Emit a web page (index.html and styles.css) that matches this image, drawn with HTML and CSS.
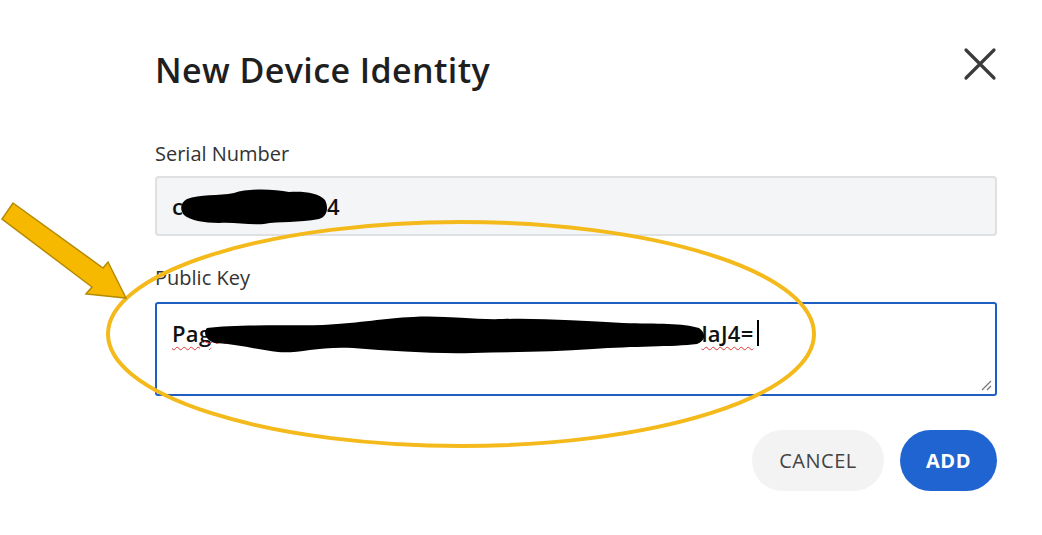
FILE: index.html
```html
<!DOCTYPE html>
<html lang="en">
<head>
<meta charset="utf-8">
<title>New Device Identity</title>
<link rel="stylesheet" href="styles.css">
</head>
<body>
<div class="page">
  <div class="dialog">
    <div class="header">
      <h1 class="title">New Device Identity</h1>
      <button class="close" aria-label="Close">
        <svg width="34" height="34" viewBox="0 0 34 34"><path d="M3 3 L31 31 M31 3 L3 31" stroke="#3b3b3b" stroke-width="3.2" stroke-linecap="round" fill="none"/></svg>
      </button>
    </div>
    <label class="label">Serial Number</label>
    <div class="input">
      <span class="txt">c</span><svg class="redact r1" width="150" height="38" viewBox="0 0 150 38"><path d="M8 11 C20 6 40 8 55 5 C70 0 95 1 110 4 C125 3 140 5 146 12 C150 20 148 29 140 31 C120 35 100 33 85 36 C70 37 55 34 40 35 C25 35 10 32 5 27 C0 21 2 14 8 11 Z" fill="#000"/></svg><span class="txt">4</span>
    </div>
    <label class="label label2">Public Key</label>
    <div class="textarea">
      <span class="key"><span class="u">Pag</span><svg class="redact r2" width="504" height="42" viewBox="0 0 504 42"><path d="M0 28.5 q2 -2 4 0 t4 0 t4 0 t4 0 t4 0 t4 0 t4 0 t4 0 t4 0 t4 0 t4 0 t4 0 t4 0 t4 0 t4 0 t4 0 t4 0 t4 0 t4 0 t4 0 t4 0 t4 0 t4 0 t4 0 t4 0 t4 0 t4 0 t4 0 t4 0 t4 0 t4 0 t4 0 t4 0 t4 0 t4 0 t4 0 t4 0 t4 0 t4 0 t4 0 t4 0 t4 0 t4 0 t4 0 t4 0 t4 0 t4 0 t4 0 t4 0 t4 0 t4 0 t4 0 t4 0 t4 0 t4 0 t4 0 t4 0 t4 0 t4 0 t4 0 t4 0 t4 0 t4 0 t4 0 t4 0 t4 0 t4 0 t4 0 t4 0 t4 0 t4 0 t4 0 t4 0 t4 0 t4 0 t4 0 t4 0 t4 0 t4 0 t4 0 t4 0 t4 0 t4 0 t4 0 t4 0 t4 0 t4 0 t4 0 t4 0 t4 0 t4 0 t4 0 t4 0 t4 0 t4 0 t4 0 t4 0 t4 0 t4 0 t4 0 t4 0 t4 0 t4 0 t4 0 t4 0 t4 0 t4 0 t4 0 t4 0 t4 0 t4 0" stroke="#e03535" stroke-width="1" fill="none"/><path d="M4 14 C30 10 80 12 120 11 C160 9 180 4 210 3 C240 1 270 6 300 5 C340 4 380 7 420 9 C455 10 480 9 496 14 C504 20 502 27 494 30 C470 33 430 32 390 35 C350 38 310 38 270 39 C230 40 190 37 150 34 C115 32 95 40 75 38 C55 36 35 30 12 29 C2 26 0 18 4 14 Z" fill="#000"/></svg><span class="u">laJ4=</span><span class="caret"></span></span>
      <svg class="grip" width="12" height="12" viewBox="0 0 12 12"><path d="M11 2 L2 11 M11 7 L7 11" stroke="#777" stroke-width="1.2" fill="none"/></svg>
    </div>
    <div class="actions">
      <button class="btn cancel">CANCEL</button>
      <button class="btn add">ADD</button>
    </div>
  </div>
  <svg class="annot" width="1042" height="535" viewBox="0 0 1042 535">
    <ellipse cx="461" cy="334" rx="353" ry="112" fill="none" stroke="#f4b91a" stroke-width="4"/>
    <polygon points="13,203 103,268 108,262 126,298 86,294 92,287 2,219" fill="#f7b800" stroke="#b58a00" stroke-width="1.5" stroke-linejoin="miter"/>
  </svg>
</div>
</body>
</html>
```

FILE: styles.css
```css
* { box-sizing: border-box; }
html, body { margin: 0; padding: 0; background: #fff; }
body { font-family: "Open Sans", "Noto Sans", sans-serif; color: #222; }
.page { position: relative; width: 1042px; height: 535px; overflow: hidden; }
.dialog { padding: 45px 45px 0 155px; display: flex; flex-direction: column; }
.header { display: flex; justify-content: space-between; align-items: flex-start; height: 50px; }
.title { margin: 0; font-size: 34px; line-height: 50px; font-weight: 600; color: #1f1f1f; letter-spacing: 0.4px; }
.close { background: none; border: 0; padding: 0; margin: 2px 0 0 0; width: 34px; height: 34px; display: flex; }
.label { display: block; margin-top: 45px; font-size: 20px; line-height: 28px; color: #333; }
.label2 { margin-top: 28px; }
.input { margin-top: 8px; height: 60px; background: #f4f5f7; border: 2px solid #dfe0e2; border-radius: 4px; padding: 0 15px; display: flex; align-items: center; font-size: 22px; font-weight: 600; color: #111; }
.txt { line-height: 30px; }
.redact { display: block; flex: none; }
.r1 { margin: 0 -2px 0 -4px; position: relative; top: 1px; }
.textarea { position: relative; margin-top: 10px; height: 94px; border: 2px solid #1f5fc3; border-radius: 3px; padding: 11px 15px 0 15px; font-size: 22px; font-weight: 600; color: #111; }
.key { display: flex; align-items: center; height: 36px; }
.u { text-decoration: underline wavy #e03535; text-decoration-thickness: 1px; text-underline-offset: 4px; line-height: 30px; letter-spacing: 0.3px; }
.r2 { margin: 0 -6px 0 -8px; position: relative; top: 2px; }
.caret { display: inline-block; width: 2px; height: 26px; background: #000; margin-left: 3px; }
.grip { position: absolute; right: 3px; bottom: 3px; }
.actions { margin-top: 34px; display: flex; justify-content: flex-end; gap: 16px; }
.btn { height: 61px; border: 0; border-radius: 31px; font-family: "Open Sans", "Noto Sans", sans-serif; font-size: 20px; letter-spacing: 0.5px; }
.cancel { width: 132px; background: #f3f3f3; color: #444; font-weight: 500; }
.add { width: 97px; background: #1f64d0; color: #fff; font-weight: 700; }
.annot { position: absolute; left: 0; top: 0; pointer-events: none; }
```
